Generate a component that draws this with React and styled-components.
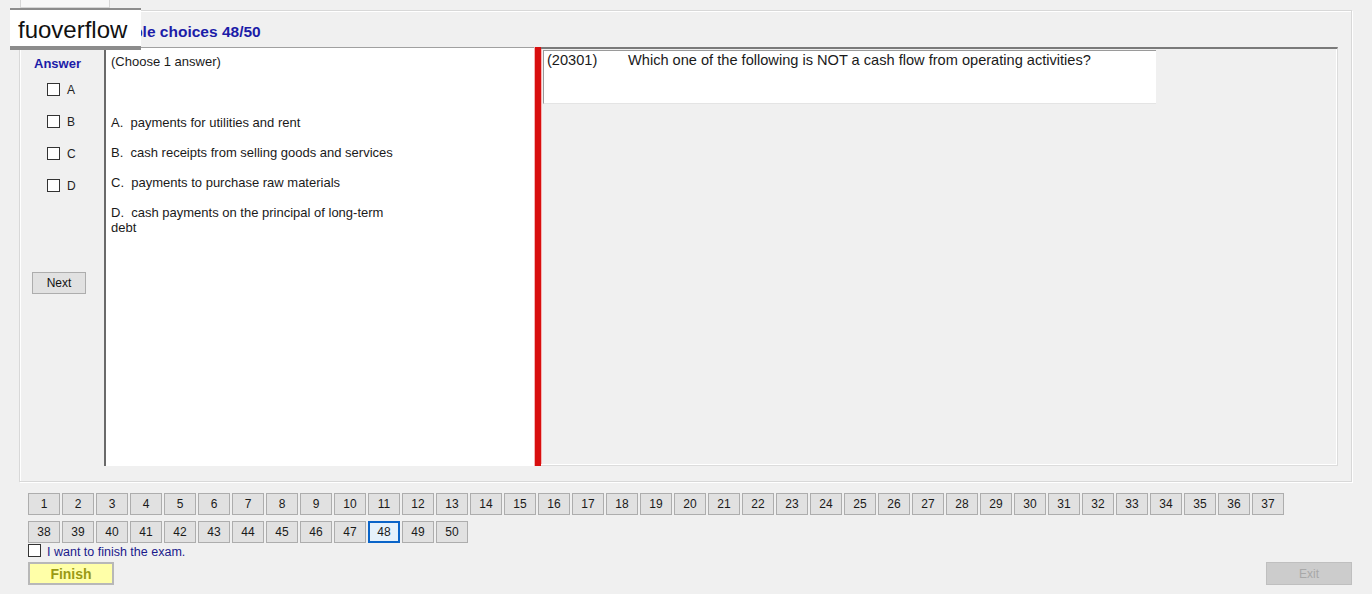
import React from 'react'
import styled, { createGlobalStyle } from 'styled-components'

const GlobalStyle = createGlobalStyle`
  html, body {
    margin: 0;
    padding: 0;
    background: #f0f0f0;
    font-family: "Liberation Sans", Arial, sans-serif;
    color: #000;
  }
`

const options = [
  'A.  payments for utilities and rent',
  'B.  cash receipts from selling goods and services',
  'C.  payments to purchase raw materials',
  'D.  cash payments on the principal of long-term debt',
]

const pages = Array.from({ length: 50 }, (_, i) => i + 1)

export default function App() {
  return (
    <Page>
      <GlobalStyle />
      <TabStrip>
        <Tab />
      </TabStrip>
      <GroupBox>
        <Title>Multiple choices 48/50</Title>
        <Content>
          <AnswerCol>
            <AnswerHead>Answer</AnswerHead>
            {['A', 'B', 'C', 'D'].map((l) => (
              <CheckRow key={l}>
                <Box />
                <span>{l}</span>
              </CheckRow>
            ))}
            <NextButton>Next</NextButton>
          </AnswerCol>
          <ChoicePanel>
            <Hint>(Choose 1 answer)</Hint>
            {options.map((o) => (
              <Option key={o}>{o}</Option>
            ))}
          </ChoicePanel>
          <Divider />
          <QuestionArea>
            <QuestionBox>
              <QNum>(20301)</QNum>
              <span>Which one of the following is NOT a cash flow from operating activities?</span>
            </QuestionBox>
          </QuestionArea>
        </Content>
      </GroupBox>
      <Bottom>
        <Pager>
          {pages.map((n) => (
            <PageButton key={n} $active={n === 48}>{n}</PageButton>
          ))}
        </Pager>
        <FinishCheck>
          <Box />
          <span>I want to finish the exam.</span>
        </FinishCheck>
        <Actions>
          <FinishButton>Finish</FinishButton>
          <ExitButton disabled>Exit</ExitButton>
        </Actions>
      </Bottom>
      <Badge>fuoverflow</Badge>
    </Page>
  )
}

const Page = styled.div`
  position: relative;
  width: 1372px;
  height: 594px;
  overflow: hidden;
`

const TabStrip = styled.div`
  height: 8px;
  padding-left: 20px;
`

const Tab = styled.div`
  width: 90px;
  height: 8px;
  box-sizing: border-box;
  border: 1px solid #d6d6d6;
  border-top: none;
  background: #f7f7f7;
`

const GroupBox = styled.div`
  margin: 2px 20px 0 19px;
  height: 472px;
  box-sizing: border-box;
  border: 1px solid #d8d8d8;
  box-shadow: inset 1px 1px 0 #fff, 1px 1px 0 #fff;
  display: flex;
  flex-direction: column;
`

const Title = styled.div`
  height: 36px;
  padding-left: 77px;
  display: flex;
  align-items: center;
  padding-top: 5px;
  box-sizing: border-box;
  font-size: 15.5px;
  font-weight: bold;
  color: #1c1ca8;
`

const Content = styled.div`
  display: flex;
  height: 419px;
  margin: 0 13px 0 2px;
`

const AnswerCol = styled.div`
  width: 82px;
  display: flex;
  flex-direction: column;
  align-items: flex-start;
`

const AnswerHead = styled.div`
  font-size: 13px;
  font-weight: bold;
  color: #1c1ca8;
  margin: 9px 0 12px 12px;
`

const CheckRow = styled.label`
  display: flex;
  align-items: center;
  gap: 7px;
  height: 13px;
  margin: 0 0 19px 25px;
  font-size: 12px;
  color: #222;
`

const Box = styled.span`
  display: inline-block;
  width: 11px;
  height: 11px;
  border: 1px solid #333;
  background: #fff;
  flex: none;
`

const NextButton = styled.button`
  margin: 61px 0 0 10px;
  width: 54px;
  height: 22px;
  border: 1px solid #adadad;
  background: #e1e1e1;
  font-family: inherit;
  font-size: 12px;
  color: #111;
  padding: 0;
`

const ChoicePanel = styled.div`
  width: 431px;
  box-sizing: border-box;
  background: #fff;
  border-left: 2px solid #6a6a6a;
  border-top: 1px solid #a0a0a0;
  padding: 6px 0 0 5px;
  font-size: 13px;
  color: #1a1a1a;
`

const Hint = styled.div`
  height: 61px;
  line-height: 15px;
`

const Option = styled.div`
  width: 290px;
  line-height: 15px;
  margin-bottom: 15px;
  white-space: pre-wrap;
`

const Divider = styled.div`
  width: 6px;
  background: #d80f0f;
  box-shadow: -1px 0 0 #f4b4b4, 1px 0 0 #f4b4b4;
`

const QuestionArea = styled.div`
  flex: 1;
  box-sizing: border-box;
  border-top: 2px solid #7a7a7a;
  border-right: 1px solid #dcdcdc;
  border-bottom: 1px solid #dcdcdc;
  box-shadow: inset -1px -1px 0 #fff;
  padding: 1px 0 0 2px;
`

const QuestionBox = styled.div`
  width: 613px;
  height: 54px;
  box-sizing: border-box;
  background: #fff;
  border-left: 1px solid #9a9a9a;
  border-top: 1px solid #9a9a9a;
  border-bottom: 1px solid #e4e4e4;
  padding: 1px 0 0 3px;
  font-size: 14.6px;
  color: #1a1a1a;
  display: flex;
`

const QNum = styled.span`
  width: 81px;
  flex: none;
`

const Bottom = styled.div`
  padding: 11px 20px 0 28px;
`

const Pager = styled.div`
  display: flex;
  flex-wrap: wrap;
  width: 1258px;
  gap: 6px 2px;
`

const PageButton = styled.button`
  width: 32px;
  height: 22px;
  padding: 0;
  box-sizing: border-box;
  border: ${(p) => (p.$active ? '2px solid #0a64c8' : '1px solid #adadad')};
  background: ${(p) => (p.$active ? '#e5f1fb' : '#e1e1e1')};
  font-family: inherit;
  font-size: 12px;
  color: #1a1a1a;
`

const FinishCheck = styled.label`
  display: flex;
  align-items: center;
  gap: 6px;
  height: 14px;
  margin-top: 2px;
  font-size: 12.5px;
  color: #1a1a8c;
  & > span:first-child {
    width: 11px;
    height: 11px;
    position: relative;
    top: -2px;
  }
`

const Actions = styled.div`
  display: flex;
  justify-content: space-between;
  margin-top: 3px;
`

const FinishButton = styled.button`
  width: 86px;
  height: 23px;
  padding: 0;
  border: 2px solid #b8b8b8;
  background: #ffffa8;
  font-family: inherit;
  font-size: 14px;
  font-weight: bold;
  color: #9a9a14;
`

const ExitButton = styled.button`
  width: 86px;
  height: 23px;
  padding: 0;
  border: 1px solid #bfbfbf;
  background: #cccccc;
  font-family: inherit;
  font-size: 12px;
  color: #a8a8a8;
`

const Badge = styled.div`
  position: absolute;
  left: 10px;
  top: 8px;
  width: 131px;
  box-sizing: border-box;
  background: #fff;
  border-top: 2px solid #8c8c8c;
  border-bottom: 4px solid #8c8c8c;
  padding: 4px 0 0 8px;
  font-size: 24px;
  line-height: 32px;
  color: #111;
`
